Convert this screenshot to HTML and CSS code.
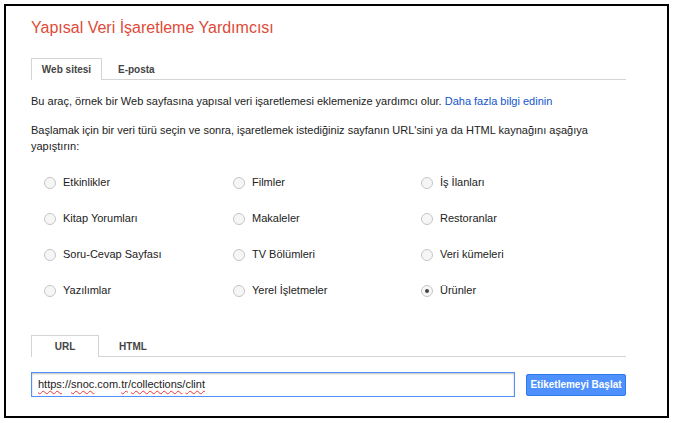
FILE: index.html
```html
<!DOCTYPE html>
<html lang="tr">
<head>
<meta charset="utf-8">
<title>Yapısal Veri İşaretleme Yardımcısı</title>
<link rel="stylesheet" href="styles.css">
</head>
<body>
<div class="frame">
  <h1 class="title">Yapısal Veri İşaretleme Yardımcısı</h1>
  <div class="tabs">
    <div class="tab active">Web sitesi</div>
    <div class="tab">E-posta</div>
  </div>
  <p class="intro">Bu araç, örnek bir Web sayfasına yapısal veri işaretlemesi eklemenize yardımcı olur. <a class="link" href="#">Daha fazla bilgi edinin</a></p>
  <p class="lead">Başlamak için bir veri türü seçin ve sonra, işaretlemek istediğiniz sayfanın URL'sini ya da HTML kaynağını aşağıya yapıştırın:</p>
  <div class="types">
    <label class="opt"><span class="radio"></span>Etkinlikler</label>
    <label class="opt"><span class="radio"></span>Filmler</label>
    <label class="opt"><span class="radio"></span>İş İlanları</label>
    <label class="opt"><span class="radio"></span>Kitap Yorumları</label>
    <label class="opt"><span class="radio"></span>Makaleler</label>
    <label class="opt"><span class="radio"></span>Restoranlar</label>
    <label class="opt"><span class="radio"></span>Soru-Cevap Sayfası</label>
    <label class="opt"><span class="radio"></span>TV Bölümleri</label>
    <label class="opt"><span class="radio"></span>Veri kümeleri</label>
    <label class="opt"><span class="radio"></span>Yazılımlar</label>
    <label class="opt"><span class="radio"></span>Yerel İşletmeler</label>
    <label class="opt"><span class="radio checked"></span>Ürünler</label>
  </div>
  <div class="tabs tabs-source">
    <div class="tab active wide">URL</div>
    <div class="tab wide">HTML</div>
  </div>
  <div class="url-row">
    <div class="url-input"><span class="sp">https</span>://<span class="sp">snoc</span>.com.<span class="sp">tr</span>/<span class="sp">collections</span>/<span class="sp">clint</span></div>
    <button class="start">Etiketlemeyi Başlat</button>
  </div>
</div>
</body>
</html>
```

FILE: styles.css
```css
* { box-sizing: border-box; }
html, body { margin: 0; padding: 0; background: #fff; }
body {
  font-family: "Liberation Sans", Arial, sans-serif;
  font-size: 11px;
  color: #222;
}
.frame {
  margin: 4px;
  width: 665px;
  height: 414px;
  border: 2px solid #000;
  padding: 0 41px 0 25px;
}
.title {
  margin: 10px 0 0;
  font-size: 16px;
  line-height: 24px;
  font-weight: normal;
  color: #dd4b39;
}
.tabs {
  display: flex;
  margin-top: 18px;
  height: 22px;
  border-bottom: 1px solid #d4d4d4;
}
.tab {
  height: 22px;
  line-height: 21px;
  padding: 0 15px;
  font-size: 10px;
  font-weight: bold;
  color: #444;
  border: 1px solid transparent;
  border-bottom: none;
}
.tab.active {
  background: #fff;
  border-color: #d4d4d4;
  margin-bottom: -1px;
  width: 71px;
  text-align: center;
  padding: 0;
}
.tab.wide { width: 68px; padding: 0; text-align: center; }
.intro {
  margin: 13px 0 0;
  line-height: 16px;
}
.link { color: #15c; text-decoration: none; }
.lead {
  margin: 13px 0 0;
  line-height: 16px;
}
.types {
  margin-top: 10px;
  padding-left: 13px;
  display: grid;
  grid-template-columns: 189px 188px 1fr;
  grid-auto-rows: 36px;
}
.opt {
  display: flex;
  align-items: center;
  gap: 7px;
}
.radio {
  width: 12px;
  height: 12px;
  border-radius: 50%;
  border: 1px solid #c6c6c6;
  background: #f6f6f6;
  display: flex;
  align-items: center;
  justify-content: center;
  margin-top: 1px;
}
.radio.checked::after {
  content: "";
  width: 4px;
  height: 4px;
  border-radius: 50%;
  background: #444;
}
.tabs-source { margin-top: 27px; }
.url-row {
  margin-top: 15px;
  display: flex;
  align-items: center;
  gap: 11px;
}
.url-input {
  width: 484px;
  height: 25px;
  border: 1px solid #4d90fe;
  box-shadow: inset 0 1px 2px rgba(0,0,0,0.25);
  padding: 0 6px;
  line-height: 23px;
  font-size: 11px;
  color: #222;
  white-space: nowrap;
}
.sp {
  text-decoration: underline wavy #e33;
  text-decoration-thickness: 1px;
  text-underline-offset: 2px;
}
.start {
  width: 100px;
  height: 22px;
  border: 1px solid #3079ed;
  border-radius: 2px;
  background: #4d90fe;
  color: #fff;
  font-family: "Liberation Sans", Arial, sans-serif;
  font-size: 10px;
  font-weight: bold;
  white-space: nowrap;
  padding: 0;
}
```
